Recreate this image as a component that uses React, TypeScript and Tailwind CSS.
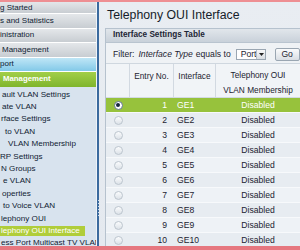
import React from "react";

function Radio({ checked }: { checked?: boolean }) {
  return checked ? (
    <span className="w-[9px] h-[9px] rounded-full border border-[#62768c] bg-white flex items-center justify-center">
      <span className="w-[4px] h-[4px] rounded-full bg-[#15263c]" />
    </span>
  ) : (
    <span className="w-[9px] h-[9px] rounded-full border border-[#bcc5ce] bg-linear-to-b from-[#fbfcfd] to-[#dce2e8]" />
  );
}

const subItems: { t: string; pl: string; sel?: boolean }[] = [
  { t: "ault VLAN Settings", pl: "pl-[2px]" },
  { t: "ate VLAN", pl: "pl-[2px]" },
  { t: "rface Settings", pl: "pl-[1px]" },
  { t: "to VLAN", pl: "pl-[5px]" },
  { t: "VLAN Membership", pl: "pl-[8px]" },
  { t: "RP Settings", pl: "pl-[0px]" },
  { t: "N Groups", pl: "pl-[1px]" },
  { t: "e VLAN", pl: "pl-[3px]" },
  { t: "operties", pl: "pl-[2px]" },
  { t: "to Voice VLAN", pl: "pl-[3px]" },
  { t: "lephony OUI", pl: "pl-[1px]" },
  { t: "lephony OUI Interface", pl: "pl-[0px]", sel: true },
  { t: "ess Port Multicast TV VLAN", pl: "pl-[1px]" },
];

export default function App() {
  const rows = Array.from({ length: 10 }, (_, i) => i + 1);
  return (
    <div className="w-[300px] h-[250px] overflow-hidden flex flex-col bg-[#e7ecf1] font-['Liberation_Sans',Arial,sans-serif]">
      <div className="h-[2px] shrink-0 bg-[#ee8f93]" />
      <div className="flex h-[244px] shrink-0">
        {/* Sidebar */}
        <aside className="w-[96px] shrink-0 flex flex-col overflow-hidden bg-[#d8e3ee] text-[#101c33]">
          <div className="h-[12px] shrink-0 flex items-center pl-[0px] text-[8px] bg-linear-to-b from-[#e4e7ea] to-[#c8cdd2] border-b border-white whitespace-nowrap">
            g Started
          </div>
          <div className="h-[14.5px] shrink-0 flex items-center pl-[0px] text-[8px] bg-linear-to-b from-[#e4e7ea] to-[#c8cdd2] border-b border-white whitespace-nowrap">
            s and Statistics
          </div>
          <div className="h-[14.5px] shrink-0 flex items-center pl-[0px] text-[8px] bg-linear-to-b from-[#e4e7ea] to-[#c8cdd2] border-b border-white whitespace-nowrap">
            inistration
          </div>
          <div className="h-[14.5px] shrink-0 flex items-center pl-[2px] text-[8px] bg-linear-to-b from-[#e4e7ea] to-[#c8cdd2] border-b border-white whitespace-nowrap">
            Management
          </div>
          <div className="h-[14.5px] shrink-0 flex items-center pl-[0px] text-[8px] bg-linear-to-b from-[#bfe6f6] to-[#82c9e8] border-b border-white whitespace-nowrap">
            port
          </div>
          <div className="h-[14.5px] shrink-0 flex items-center pl-[3px] text-[7.8px] font-bold text-white bg-linear-to-b from-[#a2cf48] to-[#7fb52c] whitespace-nowrap">
            Management
          </div>
          <div className="flex flex-col pt-[2px]">
            {subItems.map((s, i) => (
              <div
                key={i}
                className={`h-[12.4px] shrink-0 flex items-center whitespace-nowrap text-[8.1px] ${s.pl}`}
              >
                {s.sel ? (
                  <span className="h-[10px] flex items-center pl-[1px] pr-[5px] bg-[#b0cd3a] text-white">
                    {s.t}
                  </span>
                ) : (
                  s.t
                )}
              </div>
            ))}
          </div>
        </aside>
        <div className="w-[1px] shrink-0 bg-[#eef3f8]" />
        <div className="w-[2px] shrink-0 bg-[#3b6a9e] flex flex-col items-center pt-[198px] gap-[2px]">
          {[0, 1, 2, 3, 4, 5].map((d) => (
            <span key={d} className="w-[1px] h-[1px] bg-[#c9d9ea]" />
          ))}
        </div>
        {/* Main */}
        <main className="flex-1 min-w-0 overflow-hidden flex flex-col pl-[6px] bg-linear-to-b from-[#e9edf2] to-[#e4e9ef]">
          <div className="h-[26px] shrink-0 flex items-center pl-[2px] text-[12.3px] text-[#161d2a] whitespace-nowrap">
            Telephony OUI Interface
          </div>
          <section className="w-[196px] shrink-0 border border-[#b6c2ce] flex flex-col bg-[#eef2f6]">
            <div className="h-[14px] shrink-0 flex items-center pl-[7px] text-[8.2px] font-bold text-[#1c2535] bg-linear-to-b from-[#e1e6eb] to-[#c9d1da] border-b border-[#b9c4cf] whitespace-nowrap">
              Interface Settings Table
            </div>
            <div className="h-[21px] shrink-0 flex items-center pl-[7px] pt-[2px] text-[8.6px] text-[#1c2330] bg-[#eff2f5] border-b border-[#cfd7df] whitespace-nowrap">
              <span>Filter:</span>
              <span className="ml-[4px] italic">Interface Type</span>
              <span className="ml-[3px]">equals to</span>
              <span className="ml-[5px] h-[11px] w-[31px] border border-[#9aa6b2] bg-white flex items-center justify-between pl-[4px]">
                <span>Port</span>
                <span className="h-[9px] w-[9px] border-l border-[#b5bec8] bg-linear-to-b from-[#f7f8f9] to-[#d8dde2] flex items-center justify-center">
                  <svg width="5" height="3" viewBox="0 0 5 3"><path d="M0 0h5L2.5 3z" fill="#222" /></svg>
                </span>
              </span>
              <span className="ml-[9px] h-[13px] w-[30px] border border-[#9aa6b2] rounded-[2px] bg-linear-to-b from-[#fafbfc] to-[#d9dee4] flex items-center pl-[5px]">
                Go
              </span>
            </div>
            {/* header */}
            <div className="grid grid-cols-[24px_44px_42px_1fr] h-[34px] shrink-0 text-[8.3px] text-[#1c2330] bg-[#f1f4f7] border-b border-[#d3dae2]">
              <div className="border-r border-[#d2d9e1]" />
              <div className="border-r border-[#d2d9e1] flex justify-center pt-[6px]">Entry No.</div>
              <div className="border-r border-[#d2d9e1] flex justify-center pt-[6px]">Interface</div>
              <div className="flex flex-col items-center pt-[6px] leading-[15px] -mt-[2px] whitespace-nowrap">
                <span>Telephony OUI</span>
                <span>VLAN Membership</span>
              </div>
            </div>
            {rows.map((r) => {
              const sel = r === 1;
              const bg = sel ? "bg-[#97c23c] text-white" : r % 2 === 0 ? "bg-[#e7ecf1] text-[#1c2330]" : "bg-[#eef2f6] text-[#1c2330]";
              return (
                <div
                  key={r}
                  className={`grid grid-cols-[24px_44px_42px_1fr] h-[15px] shrink-0 items-center text-[8.6px] border-b border-[#f7f9fb] ${bg}`}
                >
                  <div className="flex justify-center">
                    <Radio checked={sel} />
                  </div>
                  <div className="text-right pr-[7px]">{r}</div>
                  <div className="pl-[3px]">GE{r}</div>
                  <div className="text-center">Disabled</div>
                </div>
              );
            })}
          </section>
        </main>
      </div>
      <div className="h-[4px] shrink-0 bg-[#e6777f]" />
    </div>
  );
}
